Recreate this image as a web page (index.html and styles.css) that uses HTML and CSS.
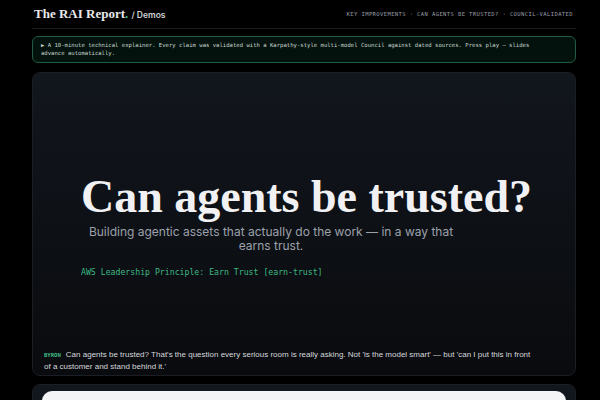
FILE: index.html
```html
<!DOCTYPE html>
<html lang="en">

<head>
    <meta charset="UTF-8" />
    <meta name="viewport" content="width=device-width, initial-scale=1.0" />
    <title>The RAI Report / Demos</title>
    <link rel="stylesheet" href="styles.css">
</head>

<body>
    <div class="page">
        <header class="topbar">
            <div class="brand">The RAI Report<span class="dot">.</span> <span class="crumb">/ Demos</span></div>
            <nav class="topnav">Key improvements · Can agents be trusted? · Council-validated</nav>
        </header>

        <div class="notice">
            ▶ A 10-minute technical explainer. Every claim was validated with a Karpathy-style multi-model Council against dated sources. Press play — slides advance automatically.
        </div>

        <section class="stage">
            <div class="slide">
                <h1 class="slide-title">Can agents be trusted?</h1>
                <p class="slide-sub">Building agentic assets that actually do the work — in a way that earns trust.</p>
                <p class="slide-tag">AWS Leadership Principle: Earn Trust [earn-trust]</p>
            </div>
            <p class="caption"><span class="speaker">Byron</span>Can agents be trusted? That's the question every serious room is really asking. Not 'is the model smart' — but 'can I put this in front of a customer and stand behind it.'</p>
        </section>

        <section class="player">
            <div class="player-panel"></div>
        </section>
    </div>
</body>

</html>
```

FILE: styles.css
```css
body {
    margin: 0;
    background: #000;
    color: #e5e7eb;
    font-family: 'Inter', 'Noto Sans', sans-serif;
    height: 400px;
    overflow: hidden;
}

.page {
    margin: 0 24px 0 32px;
}

.topbar {
    display: flex;
    justify-content: space-between;
    align-items: center;
    height: 28px;
    border-bottom: 1px solid #1b1d22;
}

.brand {
    font-family: 'Liberation Serif', serif;
    font-weight: bold;
    font-size: 13px;
    color: #e8e8ec;
    padding-left: 2px;
}

.brand .dot {
    color: #3fb984;
}

.crumb {
    font-family: 'Inter', sans-serif;
    font-size: 8.5px;
    font-weight: 600;
    color: #cfd2d8;
}

.topnav {
    font-family: 'DejaVu Sans Mono', monospace;
    font-size: 5.5px;
    letter-spacing: 0.4px;
    text-transform: uppercase;
    color: #9a9ea8;
    padding-right: 3px;
}

.notice {
    margin-top: 7px;
    padding: 4px 36px 5px 8px;
    border: 1px solid #1f5c42;
    border-radius: 6px;
    background: #03120c;
    font-family: 'DejaVu Sans Mono', monospace;
    font-size: 5.6px;
    line-height: 8px;
    color: #c9d6cf;
}

.stage {
    margin-top: 9px;
    height: 304px;
    border: 1px solid #1a1e25;
    border-radius: 8px;
    background: linear-gradient(180deg, #12161d 0%, #0d1015 55%, #0a0b0e 100%);
    display: flex;
    flex-direction: column;
    box-sizing: border-box;
}

.slide {
    flex: 1;
    display: flex;
    flex-direction: column;
    justify-content: center;
    padding: 28px 0 0 48px;
}

.slide-title {
    margin: 0;
    font-family: 'Liberation Serif', serif;
    font-weight: bold;
    font-size: 46px;
    line-height: 48px;
    color: #f1f1f4;
}

.slide-sub {
    margin: 4px 0 0;
    width: 380px;
    text-align: center;
    font-size: 12px;
    line-height: 14px;
    color: #9ca1ab;
}

.slide-tag {
    margin: 14px 0 0;
    font-family: 'DejaVu Sans Mono', monospace;
    font-size: 8.2px;
    color: #3fb984;
}

.caption {
    margin: 0;
    padding: 0 42px 2px 11px;
    font-family: 'Liberation Sans', 'Inter', sans-serif;
    font-size: 8px;
    line-height: 12px;
    color: #d6d8dd;
}

.speaker {
    display: inline-block;
    font-family: 'DejaVu Sans Mono', monospace;
    font-size: 5.6px;
    line-height: 6px;
    font-weight: bold;
    text-transform: uppercase;
    color: #3fb984;
    margin-right: 5px;
}

.player {
    margin-top: 8px;
    height: 40px;
    border: 1px solid #1a1e25;
    border-radius: 8px;
    background: #12161d;
    padding: 6px 9px 0;
}

.player-panel {
    height: 40px;
    border-radius: 10px;
    background: #f3f4f6;
}
```
